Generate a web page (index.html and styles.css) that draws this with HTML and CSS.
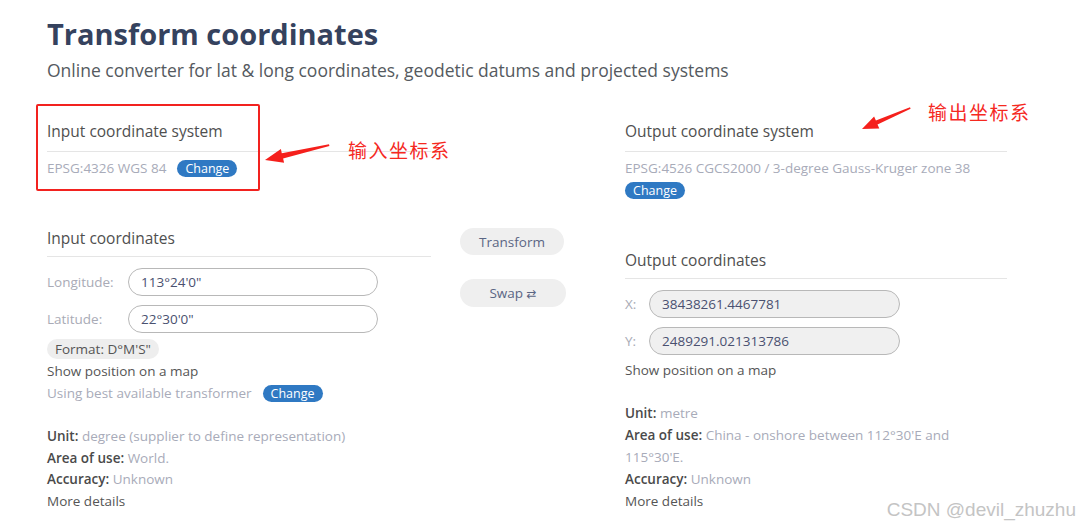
FILE: index.html
```html
<!DOCTYPE html>
<html lang="en">
<head>
<meta charset="utf-8">
<title>Transform coordinates</title>
<link rel="stylesheet" href="styles.css">
</head>
<body>
<div class="page">
  <h1 class="title">Transform coordinates</h1>
  <p class="subtitle">Online converter for lat &amp; long coordinates, geodetic datums and projected systems</p>

  <div class="grid">
    <section class="col">
      <div class="crs">
        <h2 class="sec-head">Input coordinate system</h2>
        <div class="crs-row">
          <span>EPSG:4326 WGS 84</span>
          <button class="chg">Change</button>
        </div>
      </div>

      <div class="coords coords-in">
        <h2 class="sec-head">Input coordinates</h2>
        <div class="field first">
          <label class="lbl lbl-in">Longitude:</label>
          <input class="inp" type="text" value="113°24'0&quot;" readonly>
        </div>
        <div class="field">
          <label class="lbl lbl-in">Latitude:</label>
          <input class="inp" type="text" value="22°30'0&quot;" readonly>
        </div>
        <span class="pill">Format: D°M'S"</span>
        <div class="link">Show position on a map</div>
        <div class="trans-row">
          <span class="muted">Using best available transformer</span>
          <button class="chg">Change</button>
        </div>
        <div class="meta meta-in">
          <p class="meta-line"><b>Unit:</b> <span class="muted">degree (supplier to define representation)</span></p>
          <p class="meta-line"><b>Area of use:</b> <span class="muted">World.</span></p>
          <p class="meta-line"><b>Accuracy:</b> <span class="muted">Unknown</span></p>
          <p class="meta-line link">More details</p>
        </div>
      </div>
    </section>

    <div class="mid">
      <button class="act act-transform">Transform</button>
      <button class="act act-swap">Swap <span class="swap-ico">⇄</span></button>
    </div>

    <section class="col">
      <div class="crs">
        <h2 class="sec-head">Output coordinate system</h2>
        <div class="crs-row stack">
          <span>EPSG:4526 CGCS2000 / 3-degree Gauss-Kruger zone 38</span>
          <button class="chg">Change</button>
        </div>
      </div>

      <div class="coords coords-out">
        <h2 class="sec-head">Output coordinates</h2>
        <div class="field first">
          <label class="lbl lbl-out">X:</label>
          <input class="inp inp-out" type="text" value="38438261.4467781" readonly>
        </div>
        <div class="field">
          <label class="lbl lbl-out">Y:</label>
          <input class="inp inp-out" type="text" value="2489291.021313786" readonly>
        </div>
        <div class="link link-out">Show position on a map</div>
        <div class="meta meta-out">
          <p class="meta-line"><b>Unit:</b> <span class="muted">metre</span></p>
          <p class="meta-line"><b>Area of use:</b> <span class="muted">China - onshore between 112°30'E and<br>115°30'E.</span></p>
          <p class="meta-line"><b>Accuracy:</b> <span class="muted">Unknown</span></p>
          <p class="meta-line link">More details</p>
        </div>
      </div>
    </section>
  </div>

  <!-- annotations drawn over the screenshot -->
  <div class="note-box"></div>
  <svg class="arrow arrow-in" width="70" height="26" viewBox="0 0 70 26">
    <polygon points="3,20 18.9,9.1 19.8,13.2 67,4.3 67.4,6 21.1,18.6 22.1,22.7" fill="#f5201c"/>
  </svg>
  <span class="note note-in">输入坐标系</span>
  <svg class="arrow arrow-out" width="56" height="30" viewBox="0 0 56 30">
    <polygon points="4,25 16.1,12.6 17.9,16.6 52,3.3 52.6,4.8 19.5,20.4 21.3,24.6" fill="#f5201c"/>
  </svg>
  <span class="note note-out">输出坐标系</span>

  <span class="watermark">CSDN @devil_zhuzhu</span>
</div>
</body>
</html>
```

FILE: styles.css
```css
html, body {
  margin: 0;
  padding: 0;
  background: #ffffff;
}

body {
  font-family: "Open Sans", "Noto Sans", sans-serif;
  color: #555555;
}

.page {
  position: relative;
  width: 1080px;
  height: 528px;
  box-sizing: border-box;
  padding: 16px 0 0 47px;
  overflow: hidden;
}

.title {
  margin: 0;
  font-size: 29px;
  line-height: 36px;
  font-weight: 700;
  color: #35425e;
}

.subtitle {
  margin: 6px 0 0;
  font-size: 17.5px;
  line-height: 24px;
  color: #555a60;
}

.grid {
  display: grid;
  grid-template-columns: 384px 136px 382px;
  column-gap: 29px;
  margin-top: 39px;
  align-items: start;
}

.col {
  display: flex;
  flex-direction: column;
}

.sec-head {
  margin: 0;
  font-size: 15.5px;
  line-height: 20px;
  font-weight: 400;
  color: #4f4f4f;
  padding-bottom: 10px;
  border-bottom: 1px solid #e5e5e5;
}

.crs-row {
  margin-top: 6px;
  display: flex;
  align-items: center;
  gap: 11px;
  font-size: 13.5px;
  line-height: 20px;
  color: #a8abb9;
}

.crs-row.stack {
  flex-direction: column;
  align-items: flex-start;
  gap: 4px;
}

.chg {
  width: 60px;
  height: 17px;
  padding: 0;
  border: 0;
  border-radius: 9px;
  background: #2f79c3;
  color: #ffffff;
  font-family: "Open Sans", sans-serif;
  font-size: 12.5px;
  line-height: 17px;
}

.coords .sec-head {
  padding-bottom: 8px;
}

.coords-in {
  margin-top: 50px;
  display: flex;
  flex-direction: column;
}

.coords-out {
  margin-top: 51px;
}

.field {
  display: flex;
  align-items: center;
  margin-top: 9px;
}

.field.first {
  margin-top: 11px;
}

.lbl {
  font-size: 13.5px;
  color: #a9abb6;
}

.lbl-in {
  width: 81px;
}

.lbl-out {
  width: 24px;
}

.inp {
  box-sizing: border-box;
  width: 250px;
  height: 28px;
  margin: 0;
  padding: 0 12px;
  border: 1px solid #b8b8b8;
  border-radius: 14px;
  background: #ffffff;
  font-family: "Open Sans", sans-serif;
  font-size: 13.5px;
  color: #4a5170;
  outline: none;
}

.inp-out {
  width: 251px;
  background: #f0f0f0;
}

.pill {
  align-self: flex-start;
  margin-top: 6px;
  padding: 0 8px;
  height: 20px;
  line-height: 20px;
  border-radius: 10px;
  background: #eeeeee;
  font-size: 13.5px;
  color: #555555;
}

.link {
  font-size: 13.5px;
  line-height: 22px;
  color: #555555;
}

.coords-in > .link {
  margin-top: 1px;
}

.link-out {
  margin-top: 4px;
}

.trans-row {
  display: flex;
  align-items: center;
  gap: 11px;
  font-size: 13.5px;
  line-height: 22px;
}

.muted {
  color: #a8abb9;
}

.meta {
  font-size: 13.5px;
  color: #555555;
}

.meta-line {
  margin: 0;
  line-height: 21.5px;
}

.meta b {
  font-weight: 600;
  color: #4a4a4a;
}

.meta-in {
  margin-top: 22px;
}

.meta-out {
  margin-top: 21px;
}

.meta-out .meta-line {
  line-height: 22px;
}

.mid {
  display: flex;
  flex-direction: column;
  align-items: flex-start;
  padding-top: 107px;
}

.act {
  border: 0;
  padding: 0;
  border-radius: 14px;
  background: #efefef;
  color: #5b6684;
  font-family: "Open Sans", sans-serif;
  font-size: 13.5px;
}

.act-transform {
  width: 104px;
  height: 27px;
}

.act-swap {
  margin-top: 24px;
  width: 106px;
  height: 28px;
}

.swap-ico {
  font-family: "DejaVu Sans", sans-serif;
  font-size: 12px;
}

/* annotations */
.note-box {
  position: absolute;
  left: 36px;
  top: 104px;
  width: 224px;
  height: 87px;
  box-sizing: border-box;
  border: 2px solid #f2221f;
  border-radius: 2px;
}

.arrow {
  position: absolute;
}

.arrow-in {
  left: 262px;
  top: 140px;
}

.arrow-out {
  left: 858px;
  top: 104px;
}

.note {
  position: absolute;
  font-family: "Noto Sans CJK SC", sans-serif;
  font-size: 19px;
  line-height: 24px;
  color: #f5291f;
  letter-spacing: 1.5px;
}

.note-in {
  left: 348px;
  top: 138px;
}

.note-out {
  left: 928px;
  top: 100px;
}

.watermark {
  position: absolute;
  right: 4px;
  top: 498px;
  font-family: "Liberation Sans", Arial, sans-serif;
  font-size: 19px;
  line-height: 24px;
  color: #c4c4c4;
}
```
